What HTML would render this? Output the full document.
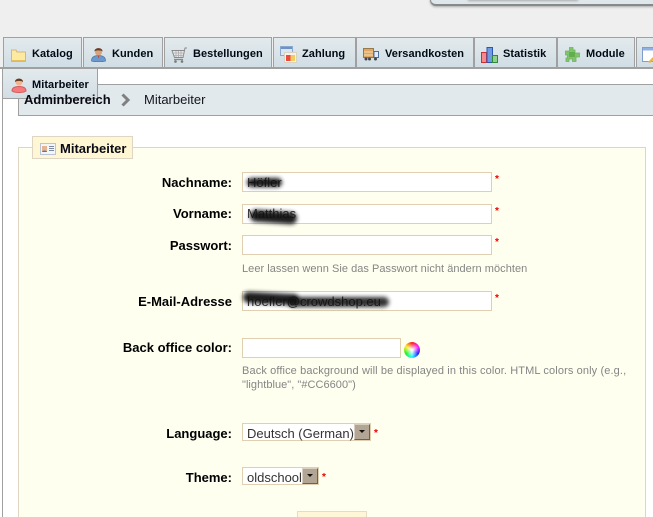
<!DOCTYPE html>
<html><head><meta charset="utf-8">
<style>
html,body{margin:0;padding:0;width:653px;height:517px;overflow:hidden;background:#fff;font-family:"Liberation Sans",sans-serif;color:#000}
div,span,svg{position:absolute;box-sizing:border-box}
#root{left:0;top:0;width:653px;height:517px;overflow:hidden;background:#fff}
.t{top:37px;height:31px;background:linear-gradient(#e3eaed,#d0dde4);border:1px solid #a0a0a0;border-bottom:none;font-weight:bold;font-size:11px;line-height:33px;white-space:nowrap;color:#000a14;letter-spacing:.06px}
.t b{position:absolute;top:0}
.l{right:421px;font-weight:bold;font-size:13px;line-height:15px;white-space:nowrap;color:#000}
.i{left:242px;width:250px;height:20px;background:#fff;border:1px solid #e0d0b1}
.s{color:#e00;font-weight:bold;font-size:10px;line-height:10px;left:495px}
.h{left:242px;font-size:11px;line-height:14px;color:#858585;white-space:nowrap;letter-spacing:.04px}
.v{left:247px;font-size:13px;line-height:15px;color:#333;white-space:nowrap}
.sel{background:#fff;border:1px solid #e0d0b1;height:18px;left:242px}
.ar{top:0;right:0;width:16px;height:16px;background:#b2a594;border:1px solid;border-color:#d8cfc2 #6b6155 #6b6155 #d8cfc2}
.ar:after{content:"";position:absolute;left:4px;top:5px;border:3px solid transparent;border-top:3px solid #111;border-bottom:none}
.bl{background:#111;filter:blur(2px);border-radius:7px}
</style></head><body>
<div id="root">
<div style="left:0;top:0;width:653px;height:68px;background:#efefef"></div>
<!-- top panel -->
<div style="left:430px;top:-20px;width:240px;height:26px;background:#dfe7ea;border-radius:0 0 6px 6px;border-bottom:2px solid #858a8c;box-shadow:0 1px 2px #aaa;border-left:1px solid #8a8f91"></div>
<div style="left:468px;top:-2px;width:110px;height:3px;background:#aaa;filter:blur(1px)"></div>

<!-- tabs -->
<div class="t" style="left:3px;width:79px"><b style="left:28px">Katalog</b>
<svg style="left:7px;top:11px" width="15" height="13" viewBox="0 0 15 13"><path d="M0.5 3V1H5L6 3H14.500V12.500H.5Z" fill="#fbe9a8" stroke="#d8b873"/><path d="M1 5H14V12H1Z" fill="#fdeaa0"/><path d="M1 11.500H14" stroke="#e2c060"/></svg></div>
<div class="t" style="left:83px;width:80px"><b style="left:28px">Kunden</b>
<svg style="left:7px;top:9px" width="15" height="15" viewBox="0 0 15 15"><path d="M.5 14C.5 10 3 8.500 7.500 8.500S14.500 10 14.500 14C11 15 4 15 .5 14Z" fill="#6c9ad0" stroke="#4f76a3" stroke-width=".8"/><circle cx="7.500" cy="5" r="3.500" fill="#d9a27d"/><path d="M3.500 4.500C3 0 12 0 11.500 4.500C10 3 5 3 3.500 4.500Z" fill="#6b3f22"/><path d="M6.800 8.500L7.500 12L8.200 8.500Z" fill="#b34a30"/></svg></div>
<div class="t" style="left:164px;width:108px"><b style="left:28px">Bestellungen</b>
<svg style="left:6px;top:9px" width="17" height="16" viewBox="0 0 17 16"><path d="M16 1H14L12 10.500H3.500L1 3.500H13.500" fill="#e9e9e9" stroke="#8a8a8a"/><path d="M2 6H13M3 8.500H12.500M5 4V10M7.500 4V10M10 4V10" stroke="#aaa" stroke-width=".8"/><path d="M3 12.500H12" stroke="#888" stroke-width="1.300"/><circle cx="4.500" cy="14.500" r="1.300" fill="#777"/><circle cx="11" cy="14.500" r="1.300" fill="#777"/></svg></div>
<div class="t" style="left:273px;width:83px"><b style="left:28px">Zahlung</b>
<svg style="left:6px;top:8px" width="17" height="17" viewBox="0 0 17 17"><rect x="0.500" y="0.500" width="12" height="9" fill="#dbe6f5" stroke="#8aa8d0"/><rect x="1" y="1" width="11" height="2" fill="#6b93c9"/><rect x="4.500" y="6.500" width="12" height="10" fill="#f6f2e6" stroke="#d6d2c4"/><rect x="6" y="9" width="4.500" height="6" fill="#ec4a40"/><rect x="10.500" y="9" width="4.500" height="6" fill="#f3cc60"/></svg></div>
<div class="t" style="left:356px;width:118px"><b style="left:28px">Versandkosten</b>
<svg style="left:6px;top:10px" width="16" height="13" viewBox="0 0 16 13"><rect x="0.500" y="0.500" width="10" height="9" fill="#dfa766" stroke="#9a7848"/><path d="M1 4H10M1 7H10" stroke="#f3dfae"/><rect x="11" y="3.500" width="4.500" height="6" fill="#e4edf8" stroke="#4e6f9e"/><circle cx="3" cy="11" r="1.500" fill="#444"/><circle cx="12.500" cy="11" r="1.500" fill="#444"/><circle cx="6.500" cy="11" r="1.500" fill="#444"/></svg></div>
<div class="t" style="left:474px;width:83px"><b style="left:28px">Statistik</b>
<svg style="left:6px;top:9px" width="17" height="16" viewBox="0 0 17 16"><rect x="0.500" y="5.500" width="5" height="10" fill="#f48a8a" stroke="#d02d2d"/><rect x="6" y="0.500" width="5.500" height="15" fill="#6f9be0" stroke="#2d55b5"/><rect x="11.500" y="8.500" width="5" height="7" fill="#8fd08f" stroke="#2f8a3a"/></svg></div>
<div class="t" style="left:557px;width:78px"><b style="left:28px">Module</b>
<svg style="left:7px;top:9px" width="15" height="15" viewBox="0 0 15 15"><path d="M4.500 .5H8V3H10V6H14.500V10H11V14.500H7.500V12H4V14.500H1V11H2.500V8H.5V4H4.500Z" fill="#80c56e" stroke="#6db25c" stroke-width=".8"/><path d="M4 5H10V10H4Z" fill="#62ad50"/></svg></div>
<div class="t" style="left:636px;width:30px">
<svg style="left:5px;top:9px" width="16" height="17" viewBox="0 0 16 17"><rect x="0.500" y="0.500" width="14" height="14" fill="#fff" stroke="#7f9ecb"/><rect x="1" y="1" width="13" height="2.500" fill="#8fb0e0"/><path d="M6 15L15 6L16 9L8 16Z" fill="#e5b64a"/></svg></div>

<!-- content -->
<div style="left:0;top:67px;width:653px;height:2px;background:#a0a0a0"></div>
<div style="left:2px;top:67px;width:1px;height:450px;background:#a0a0a0"></div>
<div style="left:18px;top:84px;width:640px;height:32px;background:#e1e9ec;border:1px solid #a0a0a0;border-right:none"></div>
<svg style="left:121px;top:93px" width="10" height="14" viewBox="0 0 10 14"><path d="M1.500 1.500L7 7L1.500 12.500" fill="none" stroke="#808080" stroke-width="3"/></svg>
<div style="left:144px;top:92px;font-size:13px;line-height:16px;color:#14141e">Mitarbeiter</div>

<div style="left:2px;top:67px;width:96px;height:32px;background:linear-gradient(#e3eaed,#d2dee4);border:1px solid #a0a0a0;border-width:2px 1px 1px 1px;font-weight:bold;font-size:11px;line-height:31px;color:#000a14;letter-spacing:.06px"><b style="position:absolute;left:29px;top:1px;white-space:nowrap">Mitarbeiter</b>
<svg style="left:8px;top:8px" width="16" height="16" viewBox="0 0 16 16"><path d="M1 14C1 10.500 4 9.500 8 9.500S15 10.500 15 14C12 16 4 16 1 14Z" fill="#f67a7a" stroke="#d65a5a"/><circle cx="8" cy="5" r="3.500" fill="#f0b48e"/><path d="M4 5C3.500 .5 12.500 .5 12 5C10 3.500 6 3.500 4 5Z" fill="#6a3a1f"/></svg></div>
<div style="left:24px;top:92px;font-size:13px;font-weight:bold;line-height:16px;color:#0a0a14">Adminbereich</div>

<!-- fieldset -->
<div style="left:18px;top:147px;width:628px;height:380px;background:#fffff0;border:1px solid #dfd5c3"></div>
<div style="left:32px;top:136px;width:101px;height:23px;background:#fff6d3;border:1px solid #dfd5c3;font-weight:bold;font-size:13px;line-height:23px;color:#0a0a14"><b style="position:absolute;left:27px;top:0;white-space:nowrap">Mitarbeiter</b>
<svg style="left:7px;top:6px" width="16" height="12" viewBox="0 0 16 12"><rect x="0.500" y="0.500" width="15" height="11" fill="#f2f5f9" stroke="#b9c4d4"/><rect x="2" y="3" width="5" height="6" fill="#e6b48f"/><path d="M2 9C2 7 7 7 7 9Z" fill="#4f79b0"/><path d="M9 3.500H14M9 5.500H14M9 7.500H14" stroke="#7d8ba0"/></svg></div>

<!-- form -->
<div class="l" style="top:175px">Nachname:</div>
<div class="i" style="top:172px"></div><span class="v" style="top:175px">Höfler</span>
<div class="bl" style="left:247px;top:178px;width:35px;height:9px;opacity:.95;border-radius:6px"></div>
<div class="s" style="top:175px">*</div>

<div class="l" style="top:206px">Vorname:</div>
<div class="i" style="top:204px"></div><span class="v" style="top:206px">Matthias</span>
<div class="bl" style="left:250px;top:211px;width:47px;height:12px;opacity:.95;transform:rotate(4deg)"></div>
<div class="s" style="top:207px">*</div>

<div class="l" style="top:238px">Passwort:</div>
<div class="i" style="top:235px"></div>
<div class="s" style="top:238px">*</div>
<div class="h" style="top:262px">Leer lassen wenn Sie das Passwort nicht ändern möchten</div>

<div class="l" style="top:294px">E-Mail-Adresse</div>
<div class="i" style="top:291px"></div><span class="v" style="top:294px">hoefler@crowdshop.eu</span>
<div class="bl" style="left:243px;top:293px;width:56px;height:11px;opacity:.95;transform:rotate(3deg)"></div>
<div class="bl" style="left:288px;top:297px;width:101px;height:10px;opacity:.86;border-radius:5px"></div>
<div class="s" style="top:294px">*</div>

<div class="l" style="top:340px">Back office color:</div>
<div class="i" style="top:338px;width:159px"></div>
<div style="left:404px;top:342px;width:16px;height:16px;border-radius:50%;background:radial-gradient(circle,#fff 5%,rgba(255,255,255,0) 60%),conic-gradient(#f22,#f2f,#22f,#2ff,#2e2,#fe2,#f22)"></div>
<div class="h" style="top:364px;letter-spacing:.12px">Back office background will be displayed in this color. HTML colors only (e.g.,</div>
<div class="h" style="top:378px">"lightblue", "#CC6600")</div>

<div class="l" style="top:426px">Language:</div>
<div class="sel" style="top:423px;width:129px"><span class="v" style="left:4px;top:2px">Deutsch (German)</span><div class="ar"></div></div>
<div class="s" style="top:429px;left:374px">*</div>

<div class="l" style="top:470px">Theme:</div>
<div class="sel" style="top:467px;width:77px"><span class="v" style="left:4px;top:2px">oldschool</span><div class="ar"></div></div>
<div class="s" style="top:473px;left:322px">*</div>

<div style="left:297px;top:511px;width:70px;height:10px;background:#fff6d8;border:1px solid #e6dcc4"></div>
</div>
</body></html>
